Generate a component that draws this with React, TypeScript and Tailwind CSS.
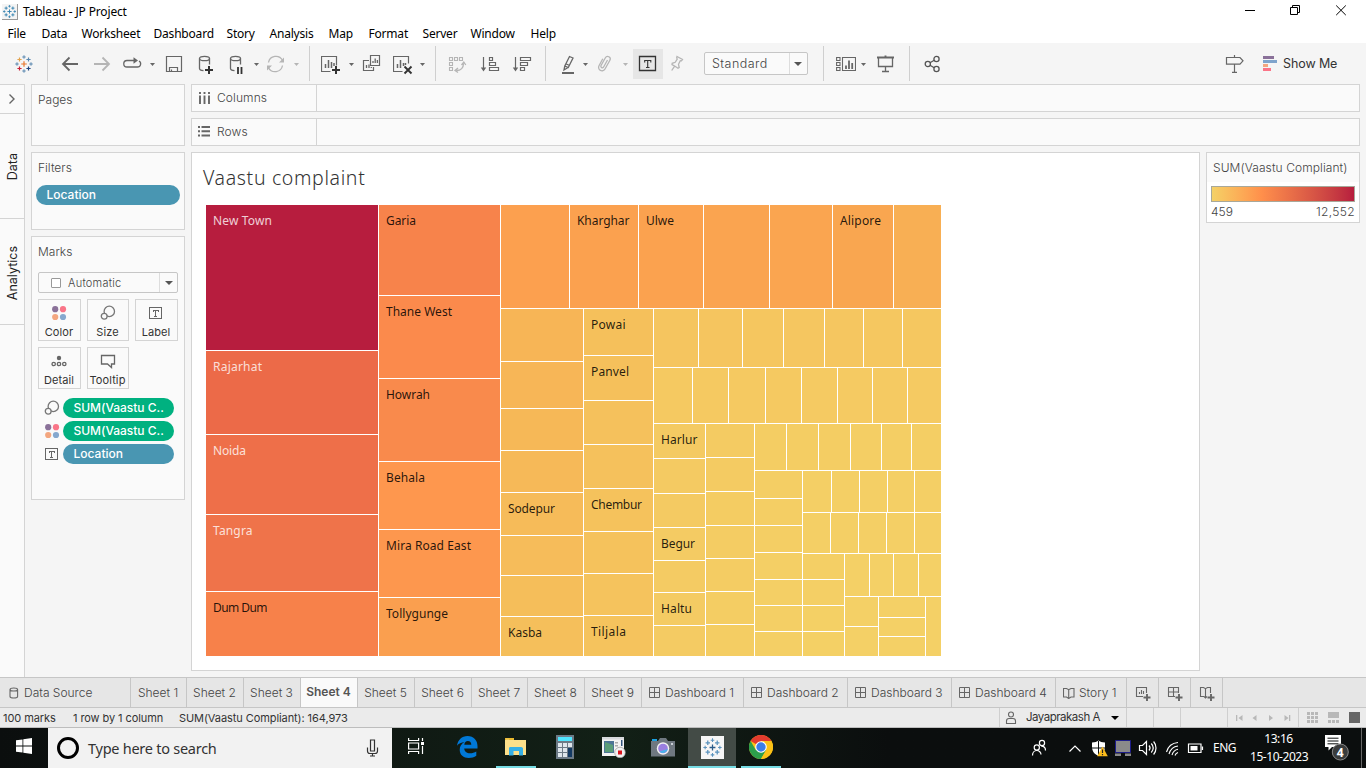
import type { ReactNode } from "react";

/* ---------- treemap ---------- */

type Cell = { x: number; y: number; w: number; h: number; fill: string; label?: string; len?: number; light?: boolean };
type Lbl = [string, number, boolean?];
type RGB = [number, number, number];

const mix = (a: RGB, b: RGB, t: number) =>
  `rgb(${a.map((v, i) => Math.round(v + (b[i] - v) * t)).join(",")})`;

/* A strip of cells, cut vertically ("col") or horizontally ("row") at the given 1px gaps. */
function strip(
  dir: "col" | "row",
  [x0, y0, x1, y1]: [number, number, number, number],
  cuts: number[],
  a: RGB,
  b: RGB,
  labels: Record<number, Lbl> = {},
): Cell[] {
  const ends = [...cuts, dir === "col" ? y1 : x1];
  let start = dir === "col" ? y0 : x0;
  return ends.map((end, i) => {
    const l = labels[i];
    const base = { fill: mix(a, b, ends.length > 1 ? i / (ends.length - 1) : 0), label: l?.[0], len: l?.[1], light: l?.[2] };
    const c =
      dir === "col"
        ? { x: x0, y: start, w: x1 - x0, h: end - start, ...base }
        : { x: start, y: y0, w: end - start, h: y1 - y0, ...base };
    start = end + 1;
    return c;
  });
}

const cells: Cell[] = [
  ...strip("col", [206, 205, 378, 350], [], [183, 29, 62], [183, 29, 62], { 0: ["New Town", 59, true] }),
  ...strip("col", [206, 351, 378, 591], [434, 514], [236, 106, 72], [239, 115, 74], {
    0: ["Rajarhat", 49, true],
    1: ["Noida", 33, true],
    2: ["Tangra", 39.5, true],
  }),
  ...strip("col", [206, 592, 378, 656], [], [247, 129, 74], [247, 129, 74], { 0: ["Dum Dum", 54.5] }),
  ...strip("col", [379, 205, 500, 295], [], [247, 131, 75], [247, 131, 75], { 0: ["Garia", 30] }),
  ...strip("col", [379, 296, 500, 461], [378], [251, 138, 76], [249, 138, 76], { 0: ["Thane West", 66], 1: ["Howrah", 44] }),
  ...strip("col", [379, 462, 500, 597], [529], [254, 151, 78], [253, 151, 78], { 0: ["Behala", 39], 1: ["Mira Road East", 85] }),
  ...strip("col", [379, 598, 500, 656], [], [250, 159, 79], [250, 159, 79], { 0: ["Tollygunge", 62] }),
  ...strip("row", [501, 205, 893, 308], [569, 638, 703, 769, 832], [252, 160, 79], [249, 166, 80], {
    1: ["Kharghar", 52.5],
    2: ["Ulwe", 28],
    5: ["Alipore", 41],
  }),
  ...strip("row", [894, 205, 941, 308], [], [248, 175, 84], [248, 175, 84]),
  ...strip("col", [501, 309, 583, 656], [361, 408, 450, 492, 535, 575, 616], [247, 181, 86], [245, 191, 91], {
    4: ["Sodepur", 47],
    7: ["Kasba", 34],
  }),
  ...strip("col", [584, 309, 653, 656], [355, 400, 444, 488, 531, 573, 615], [245, 192, 91], [245, 195, 93], {
    0: ["Powai", 34.5],
    1: ["Panvel", 38],
    4: ["Chembur", 51],
    7: ["Tiljala", 35],
  }),
  ...strip("row", [654, 309, 941, 367], [698, 742, 783, 824, 863, 902], [245, 197, 95], [245, 199, 96]),
  ...strip("row", [654, 368, 941, 423], [692, 728, 765, 801, 837, 872, 907], [245, 201, 97], [245, 202, 98]),
  ...strip("col", [654, 424, 705, 656], [458, 493, 527, 560, 592, 625], [244, 202, 98], [244, 203, 99], {
    0: ["Harlur", 36.5],
    3: ["Begur", 34],
    5: ["Haltu", 31],
  }),
  ...strip("col", [706, 424, 754, 656], [457, 491, 525, 558, 591, 624], [244, 203, 98], [244, 205, 99]),
  ...strip("row", [755, 424, 941, 470], [786, 818, 850, 881, 911], [244, 205, 99], [244, 206, 100]),
  ...strip("col", [755, 471, 802, 656], [498, 525, 552, 579, 605, 631], [244, 206, 100], [244, 207, 101]),
  ...strip("row", [803, 471, 941, 512], [831, 859, 887, 914], [244, 207, 101], [244, 207, 101]),
  ...strip("row", [803, 513, 941, 553], [830, 858, 886, 914], [244, 207, 101], [244, 207, 101]),
  ...strip("col", [803, 554, 844, 656], [579, 605, 631], [244, 207, 101], [244, 208, 101]),
  ...strip("row", [845, 554, 941, 596], [869, 893, 918], [244, 208, 102], [244, 208, 102]),
  ...strip("col", [845, 597, 878, 656], [626], [244, 208, 102], [244, 208, 102]),
  ...strip("col", [879, 597, 925, 656], [617, 636], [244, 208, 102], [244, 208, 102]),
  ...strip("col", [926, 597, 941, 656], [], [244, 208, 102], [244, 208, 102]),
];

function Treemap() {
  return (
    <svg width="735" height="451" viewBox="206 205 735 451" className="block" shapeRendering="crispEdges">
      {cells.map((c, i) => (
        <rect key={i} x={c.x} y={c.y} width={c.w} height={c.h} fill={c.fill} />
      ))}
      {cells
        .filter((c) => c.label)
        .map((c) => (
          <text
            key={c.label}
            x={c.x + 7}
            y={c.y + 20}
            textLength={c.len}
            className="font-['Noto_Sans',sans-serif] text-[12px]"
            fill={c.light ? "rgba(255,255,255,.8)" : "rgba(0,0,0,.85)"}
          >
            {c.label}
          </text>
        ))}
    </svg>
  );
}

/* ---------- icons ---------- */

function Ico({ w = 20, h = 24, className = "", children }: { w?: number; h?: number; className?: string; children: ReactNode }) {
  return (
    <svg
      width={w}
      height={h}
      viewBox={`0 0 ${w} ${h}`}
      fill="none"
      stroke="#666"
      strokeWidth="1.3"
      className={`block shrink-0 ${className}`}
    >
      {children}
    </svg>
  );
}

const Caret = ({ className = "", color = "#666" }: { className?: string; color?: string }) => (
  <Ico w={6} className={className}>
    <path d="M0 11h5l-2.500 3z" fill={color} stroke="none" />
  </Ico>
);

const Sep = ({ className = "" }: { className?: string }) => <div className={`h-[35px] w-px shrink-0 bg-[#cfcfcf] ${className}`} />;

function LogoMark({ size, palette, className = "" }: { size: number; palette: string[]; className?: string }) {
  const plus = (x: number, y: number, r: number) => `M${x - r} ${y}h${2 * r}M${x} ${y - r}v${2 * r}`;
  const [c, o, s, u, v] = palette;
  return (
    <svg width={size} height={size} viewBox="0 0 20 20" fill="none" strokeWidth="1.2" className={`block shrink-0 ${className}`}>
      <path d={plus(10, 10, 2.8)} stroke={c} />
      <path d={plus(5.5, 5.5, 2.1)} stroke={o} />
      <path d={plus(14.5, 5.5, 2.1)} stroke={s} />
      <path d={plus(5.5, 14.5, 2.1)} stroke={u} />
      <path d={plus(14.5, 14.5, 2.1)} stroke={v} />
      <path d={`${plus(10, 3, 1.7)}${plus(3, 10, 1.7)}${plus(17, 10, 1.7)}${plus(10, 17, 1.7)}`} stroke={s} strokeWidth="1" />
    </svg>
  );
}

const Bubbles = () => (
  <Ico w={16} h={16} className="[stroke:#777]">
    <circle cx="9.3" cy="6.4" r="5.2" />
    <circle cx="4.2" cy="11.2" r="2.9" fill="#fafafa" />
  </Ico>
);
const Dots = () => (
  <Ico w={16} h={16}>
    <g stroke="none">
      <circle cx="4.2" cy="4.2" r="3.1" fill="#8a7199" />
      <circle cx="12" cy="4.2" r="3.1" fill="#f97588" />
      <circle cx="4.2" cy="12" r="3.1" fill="#f3a67f" />
      <circle cx="12" cy="12" r="3.1" fill="#86a8ce" />
    </g>
  </Ico>
);
const TBox = () => (
  <Ico w={16} h={16}>
    <path d="M1.500 2.500h12v11h-12zM5 5.500h5M7.500 5.500v5.500M6 11h3M5 5v2M10 5v2" strokeWidth="1" shapeRendering="crispEdges" />
  </Ico>
);

/* ---------- chrome ---------- */

const menus: [string, string][] = [
  ["File", "w-[34px]"],
  ["Data", "w-[40px]"],
  ["Worksheet", "w-[72px]"],
  ["Dashboard", "w-[73px]"],
  ["Story", "w-[43px]"],
  ["Analysis", "w-[59px]"],
  ["Map", "w-[40px]"],
  ["Format", "w-[54px]"],
  ["Server", "w-[48px]"],
  ["Window", "w-[60px]"],
  ["Help", "w-[40px]"],
];

function TitleBar() {
  return (
    <header className="h-[43px] bg-white font-['Noto_Sans','Open_Sans',sans-serif] text-[12px] text-black">
      <div className="flex h-6 items-center">
        <div className="ml-[2px] flex size-4 items-center justify-center border-r border-b border-[#999] bg-[#f4f4f4]">
          <LogoMark size={15} palette={["#2f7fae", "#2f7fae", "#2f7fae", "#2f7fae", "#2f7fae"]} />
        </div>
        <span className="ml-[5px] tracking-[-0.15px]">Tableau - JP Project</span>
        <svg className="ml-auto mr-[17px] block" width="104" height="20" viewBox="1245 1.500 104 20" fill="none" stroke="#000" strokeWidth="1">
          <path d="M1245 10h10" />
          <path d="M1290.500 7h7v7h-7zM1292.500 7v-2h7v7h-2" />
          <path d="M1336.200 5l9.600 9.600M1345.800 5l-9.600 9.600" />
        </svg>
      </div>
      <nav className="flex h-[19px] items-center pl-[7.500px]">
        {menus.map(([m, w]) => (
          <span key={m} className={`shrink-0 tracking-[-0.2px] ${w}`}>
            {m}
          </span>
        ))}
      </nav>
    </header>
  );
}

function Toolbar() {
  return (
    <div className="flex h-[41px] items-center bg-[#f5f5f5]">
      <LogoMark size={20} className="ml-[14px]" palette={["#e8762c", "#e2a24d", "#5b88b0", "#c72037", "#1f447e"]} />
      <Sep className="ml-[13px]" />
      <Ico className="ml-3">
        <path d="M18 12H3M9.500 5.500L3 12l6.500 6.500" strokeWidth="1.800" />
      </Ico>
      <Ico className="ml-3 [stroke:#b5b5b5]">
        <path d="M2 12h15M10.500 5.500L17 12l-6.500 6.500" strokeWidth="1.800" />
      </Ico>
      <Ico className="ml-[10px]">
        <path d="M12 8.500H5a3.200 3.200 0 0 0 0 6.500h10.500a3.200 3.200 0 0 0 1.500-6" />
        <path d="M11.500 5.300l4.500 3.200-4.500 3.200z" fill="#666" stroke="none" />
      </Ico>
      <Caret className="ml-2" />
      <Ico className="ml-2">
        <path d="M2.500 4.500h15v15h-15zM5.500 19.500v-4h8v4M7.500 19.500v-2" strokeWidth="1.200" />
      </Ico>
      <Ico className="ml-3">
        <ellipse cx="8.500" cy="6.500" rx="5" ry="2.200" />
        <path d="M3.500 6.500v10c0 1.200 2 2 4 2.200M13.500 6.500v6" />
        <path d="M13 14v8M9 18h8" stroke="#333" strokeWidth="2" />
      </Ico>
      <Ico className="ml-[11px]">
        <ellipse cx="8.500" cy="6.500" rx="5" ry="2.200" />
        <path d="M3.500 6.500v10c0 1.200 2 2 4 2.200M13.500 6.500v6" />
        <path d="M11 15v7M14.500 15v7" stroke="#333" strokeWidth="1.800" />
      </Ico>
      <Caret className="ml-[7px]" />
      <Ico className="ml-[6px] [stroke:#b5b5b5]">
        <path d="M2.500 10.500a7.500 7.500 0 0 1 14-2.200M16.500 13.500a7.500 7.500 0 0 1-14 2.200" />
        <path d="M18 5.500v5h-5zM1 18.500v-5h5z" fill="#b5b5b5" stroke="none" />
      </Ico>
      <Caret className="ml-2" color="#b5b5b5" />
      <Sep className="ml-[9px]" />
      <Ico className="ml-[11px]">
        <path d="M9.500 19.500h-9v-15h15v9" strokeWidth="1.200" />
        <path d="M4.500 16v-4M7.500 16V8M10.500 16v-6M13 14v-3" strokeWidth="1.500" />
        <path d="M15 14v8M11 18h8" stroke="#333" strokeWidth="2" />
      </Ico>
      <Caret className="ml-2" />
      <Ico className="ml-[7px]">
        <path d="M8.500 3.500h9v10h-9zM7 8.500H1.500v10h10V15" strokeWidth="1.200" />
        <path d="M11 11V9M13.200 11V6.500M15.400 11V8M4.500 16v-3M7 16v-3.500M9.300 16v-1" />
      </Ico>
      <Ico className="ml-[11px]">
        <path d="M9.500 19.500h-9v-15h15v7" strokeWidth="1.200" />
        <path d="M4.500 16v-4M7.500 16V8M10.500 14v-3M12.500 13v-2" strokeWidth="1.500" />
        <path d="M11.500 14.500l7 7M18.500 14.500l-7 7" stroke="#333" strokeWidth="1.900" />
      </Ico>
      <Caret className="ml-[7px]" />
      <Sep className="ml-[9px]" />
      <Ico className="ml-3 [stroke:#b5b5b5]">
        <path d="M1.500 5.500h3v3h-3zM6.500 5.500h3v3h-3zM11.500 5.500h3v3h-3zM1.500 10.500h3v3h-3zM1.500 15.500h3v3h-3z" strokeWidth="1.100" />
        <path d="M15.500 11.500c0 4-2.500 7-7 7M13.500 13l2.300-3 2 3M10 16l-3 2.500 3 2" />
      </Ico>
      <Ico className="ml-3">
        <path d="M3.500 5v12M9.500 5.500h3v3h-3zM9.500 10.500h6v3h-6zM9.500 15.500h9v3h-9z" strokeWidth="1.200" />
        <path d="M.8 15.500h5.400l-2.700 4z" fill="#666" stroke="none" />
      </Ico>
      <Ico className="ml-3">
        <path d="M3.500 5v12M8.500 5.500h10v3h-10zM8.500 10.500h7v3h-7zM8.500 15.500h4v3h-4z" strokeWidth="1.200" />
        <path d="M.8 15.500h5.400l-2.700 4z" fill="#666" stroke="none" />
      </Ico>
      <Sep className="ml-[13px]" />
      <Ico className="ml-[14px]">
        <path d="M9.500 4.500l3.500 1.500-4.700 9.500-3.500-1.500zM4.800 14l-.8 4 4-2.500M6.200 12l3.500 1.500" />
        <path d="M2 21h12" strokeWidth="2" />
      </Ico>
      <Caret className="ml-[3px]" />
      <Ico className="ml-[7px] [stroke:#b5b5b5]">
        <path d="M11.500 8l-4 7.200a1.500 1.500 0 0 1-2.600-1.400l4.500-8a2.500 2.500 0 0 1 4.500 2.400L9 17a3.400 3.400 0 0 1-6-3.200l3.800-7" />
      </Ico>
      <Caret className="ml-[7px]" color="#b5b5b5" />
      <div className="ml-1 flex size-[30px] shrink-0 items-center justify-center bg-[#e6e6e6]">
        <Ico h={20} className="[stroke:#333]">
          <path d="M1.500 2.500h16v14h-16z" />
          <path d="M6.500 6.500H13M9.700 6.500v7M8 13.500h3.500M6.700 6v2.500M12.800 6v2.500" strokeWidth="1.100" />
        </Ico>
      </div>
      <Ico className="ml-[5px] [stroke:#b5b5b5]">
        <path d="M9 4.500l5.500 3-1 1.300-1.200-.2-1.800 3.700.7 3.200-1.200.8-3-2-3-1.700.2-1.300 3-1 2-3.200-.5-1.300zM6.500 14.300L3.700 18.500" />
      </Ico>
      <div className="ml-4 flex h-[23px] w-[104px] shrink-0 items-center rounded-[2px] border border-[#c6c6c6] bg-[#fafafa] pl-[7px] font-['Inter',sans-serif] text-[12.500px] text-[#444]">
        <span className="w-[77px] pt-px font-light tracking-[0.45px]">Standard</span>
        <span className="flex h-full items-center border-l border-[#ddd] pl-[4px]">
          <svg width="8" height="4" className="block">
            <path d="M0 0h8L4 4z" fill="#555" />
          </svg>
        </span>
      </div>
      <Sep className="ml-[15px]" />
      <Ico className="ml-3">
        <path d="M.6 5.500h3.400v3H.6zM.6 10.500h3.400v3H.6zM.6 15.500h3.400v3H.6zM6.500 5.500h13v13h-13z" strokeWidth="1.100" />
        <path d="M10 17v-3.500M13 17V8.500M16.200 17v-6" strokeWidth="1.800" />
      </Ico>
      <Caret className="ml-[5px]" />
      <Ico className="ml-[9px]">
        <path d="M1 5.500h17M9.500 3.500v2" strokeWidth="1.900" />
        <path d="M2.500 6v8.500h14V6M9.500 14.500v5M6 19.500h7" />
      </Ico>
      <Sep className="ml-[13px]" />
      <Ico className="ml-[13px] [stroke:#555]">
        <circle cx="4.800" cy="12" r="2.600" />
        <circle cx="13.500" cy="7" r="2.600" />
        <circle cx="13.500" cy="17" r="2.600" />
        <path d="M7 10.700l4.200-2.400M7 13.300l4.200 2.400" />
      </Ico>
      <Ico className="ml-[282px]">
        <path d="M1.500 5.500H15l3 3.300-3 3.400H1.500zM9.500 3v2.500M9.500 12v8M7 20.300h5" strokeWidth="1.200" />
      </Ico>
      <Ico w={14} className="ml-[18px]">
        <g stroke="none">
          <path d="M0 4h11v3H0z" fill="#8a7199" />
          <path d="M0 8h14v3H0z" fill="#7fa4cc" />
          <path d="M0 12h5v3H0z" fill="#f3a67f" />
          <path d="M0 16h8v3H0z" fill="#fb7487" />
        </g>
      </Ico>
      <span className="ml-[6px] pt-px font-['Inter',sans-serif] text-[12.500px] tracking-[-0.1px] whitespace-nowrap text-[#333]">Show Me</span>
    </div>
  );
}

const card = "border border-[#d4d4d4] bg-[#fafafa]";

function MarkButton({ label, children }: { label: string; children: ReactNode }) {
  return (
    <div className={`flex h-[42px] flex-col items-center pt-[5px] pr-px ${card}`}>
      {children}
      <span className="mt-[3px] text-[11px] leading-[16px] tracking-[0.1px] whitespace-nowrap text-[#333]">{label}</span>
    </div>
  );
}

function Pill({ className, children }: { className: string; children: ReactNode }) {
  return (
    <div className={`flex h-5 items-center rounded-full text-[12px] font-medium whitespace-nowrap text-white ${className}`}>{children}</div>
  );
}

function SideCards() {
  return (
    <aside className="ml-[6px] flex w-[154px] shrink-0 flex-col gap-[6px] font-['Inter',sans-serif] text-[12px] text-[#444]">
      <section className={`h-[62px] px-[6px] pt-[7px] ${card}`}>
        <h2 className="leading-[16px] font-light">Pages</h2>
      </section>
      <section className={`h-[78px] px-1 pt-[7px] ${card}`}>
        <h2 className="pl-[2px] leading-[16px] font-light">Filters</h2>
        <Pill className="mt-[9px] bg-[#4996b2] pl-[10.500px]">Location</Pill>
      </section>
      <section className={`h-[264px] px-[6px] pt-[7px] ${card}`}>
        <h2 className="leading-[16px] font-light">Marks</h2>
        <div className="mt-[12px] flex h-[21px] items-center rounded-[2px] border border-[#c6c6c6] pl-3 text-[11px]">
          <span className="size-[10px] rounded-[1px] border border-[#999] bg-white" />
          <span className="ml-[7px] w-[91px] pt-px font-light tracking-[0.25px]">Automatic</span>
          <span className="flex h-full items-center border-l border-[#ddd] pl-[5px]">
            <svg width="8" height="4" className="block">
              <path d="M0 0h8L4 4z" fill="#555" />
            </svg>
          </span>
        </div>
        <div className="mt-[6px] grid grid-cols-[43px_42px_43px] gap-[6px]">
          <MarkButton label="Color">
            <Dots />
          </MarkButton>
          <MarkButton label="Size">
            <Bubbles />
          </MarkButton>
          <MarkButton label="Label">
            <TBox />
          </MarkButton>
          <MarkButton label="Detail">
            <Ico w={16} h={16}>
              <circle cx="8" cy="5" r="2.200" fill="#666" stroke="none" />
              <circle cx="2.700" cy="11" r="1.700" />
              <circle cx="8" cy="11" r="1.700" />
              <circle cx="13.300" cy="11" r="1.700" />
            </Ico>
          </MarkButton>
          <MarkButton label="Tooltip">
            <Ico w={16} h={16}>
              <path d="M1.500 2.500h13v8.500h-3v3.500L7.500 11h-6z" />
            </Ico>
          </MarkButton>
        </div>
        <div className="mt-[9px] grid grid-cols-[16px_111px] items-center gap-x-[3px] gap-y-[3px] pl-[6px]">
          <Bubbles />
          <Pill className="bg-[#00b180] pl-[10.500px] tracking-[-0.02px]">SUM(Vaastu C..</Pill>
          <Dots />
          <Pill className="bg-[#00b180] pl-[10.500px] tracking-[-0.02px]">SUM(Vaastu C..</Pill>
          <TBox />
          <Pill className="bg-[#4996b2] pl-[10.500px]">Location</Pill>
        </div>
      </section>
    </aside>
  );
}

function Shelf({ label, children }: { label: string; children: ReactNode }) {
  return (
    <div className={`flex h-[28px] shrink-0 items-center pl-[5px] ${card}`}>
      {children}
      <span className="ml-[6px] w-[99px] text-[12px] font-light tracking-[0.1px]">{label}</span>
      <span className="h-full w-px bg-[#d4d4d4]" />
    </div>
  );
}

function Workspace() {
  return (
    <div className="flex h-[593px] bg-[#f5f5f5]">
      <div className="flex w-[25px] shrink-0 flex-col border-t border-r border-[#d4d4d4] bg-[#fafafa] font-['Inter',sans-serif] text-[12.500px] text-[#222]">
        <div className="flex h-[29px] items-center justify-center border-b border-[#d4d4d4]">
          <Ico w={8} h={12}>
            <path d="M1.500 1.500L6 6l-4.500 4.500" strokeWidth="1.400" />
          </Ico>
        </div>
        <div className="flex h-[105px] items-center justify-center border-b border-[#d4d4d4] pt-[2px] pl-[2px]">
          <span className="rotate-180 [writing-mode:vertical-rl]">Data</span>
        </div>
        <div className="flex h-[106px] items-center justify-center border-b border-[#d4d4d4] pt-[3px] pl-[2px]">
          <span className="rotate-180 [writing-mode:vertical-rl]">Analytics</span>
        </div>
      </div>
      <SideCards />
      <main className="ml-[6px] flex w-[1169px] shrink-0 flex-col gap-[6px] font-['Inter',sans-serif] text-[#444]">
        <Shelf label="Columns">
          <Ico w={14} h={14}>
            <path d="M3 1v2M7.500 1v2M12 1v2M3 4.500V13M7.500 4.500V13M12 4.500V13" strokeWidth="1.900" />
          </Ico>
        </Shelf>
        <Shelf label="Rows">
          <Ico w={14} h={14}>
            <path d="M1 2h2M1 6.200h2M1 10.500h2M4.500 2H13M4.500 6.200H13M4.500 10.500H13" strokeWidth="1.900" />
          </Ico>
        </Shelf>
        <div className="flex items-start gap-[6px]">
          <section className="h-[519px] w-[1009px] shrink-0 border border-[#d4d4d4] bg-white pt-[12px] pl-[11px]">
            <h1 className="font-['Noto_Sans',sans-serif] text-[19.500px] leading-[26px] font-light tracking-[0.650px] text-[#333]">Vaastu complaint</h1>
            <div className="mt-[14px] ml-[3px]">
              <Treemap />
            </div>
          </section>
          <section className="h-[71px] w-[154px] shrink-0 border border-[#d4d4d4] bg-white">
            <h2 className="h-[29px] bg-[#fafafa] pt-[6px] pl-[6px] text-[12px] leading-[18px] font-light tracking-[0.08px] whitespace-nowrap">
              SUM(Vaastu Compliant)
            </h2>
            <div className="mt-[4px] ml-1 h-4 w-36 border border-[#a8a89a] bg-linear-to-r from-[#f4d166] via-[#ff8f4b] via-35% to-[#b71d3e]" />
            <div className="flex w-[148px] justify-between pt-px pl-1 text-[12px] leading-[18px] font-light tracking-[0.350px]">
              <span className="tracking-normal">459</span>
              <span>12,552</span>
            </div>
          </section>
        </div>
      </main>
    </div>
  );
}

/* ---------- bottom bars ---------- */

const GridIco = () => (
  <Ico w={12} h={12} className="mr-[4px]">
    <path d="M.5 .5h10v10H.5zM5.500 .5v10M.5 5.500h10" strokeWidth="1" />
  </Ico>
);

const sheetTabs: [string, string][] = [
  ["Sheet 1", "w-[56px]"],
  ["Sheet 2", "w-[57px]"],
  ["Sheet 3", "w-[57px]"],
  ["Sheet 4", "w-[57px]"],
  ["Sheet 5", "w-[57px]"],
  ["Sheet 6", "w-[57px]"],
  ["Sheet 7", "w-[56px]"],
  ["Sheet 8", "w-[57px]"],
  ["Sheet 9", "w-[57px]"],
];
const dashTabs: [string, string][] = [
  ["Dashboard 1", "w-[102px]"],
  ["Dashboard 2", "w-[104px]"],
  ["Dashboard 3", "w-[104px]"],
  ["Dashboard 4", "w-[104px]"],
];

function SheetTabs() {
  const tab = "flex shrink-0 items-center border-r border-[#c6c6c6] whitespace-nowrap";
  return (
    <div className="flex h-[31px] border-t border-b border-[#c6c6c6] bg-[#e6e6e6] font-['Inter',sans-serif] text-[12px] font-light text-[#444]">
      <div className={`w-[131px] pl-[9px] ${tab}`}>
        <Ico w={10} h={12} className="mr-[5px]">
          <path d="M1 2.500v7c0 .8 1 1.500 3.800 1.500s3.800-.7 3.800-1.500v-7C8.600 1.700 7.600 1 4.800 1S1 1.700 1 2.500c0 .8 1 1.500 3.800 1.500s3.800-.7 3.800-1.500" strokeWidth="1.100" />
        </Ico>
        Data Source
      </div>
      {sheetTabs.map(([t, w]) => (
        <div key={t} className={`justify-center pr-px ${tab} ${w} ${t === "Sheet 4" ? "bg-[#fafafa] pb-[2px] font-semibold text-[#555]" : ""}`}>
          {t}
        </div>
      ))}
      {dashTabs.map(([t, w]) => (
        <div key={t} className={`pl-[7px] ${tab} ${w}`}>
          <GridIco />
          {t}
        </div>
      ))}
      <div className={`w-[71px] pl-[7px] ${tab}`}>
        <Ico w={12} h={12} className="mr-[4px]">
          <path d="M.5 1.500l3 0 2.200 1.200L8 1.500h3v8.500H8L5.700 11.500 3.500 10h-3zM5.700 2.700v8.500" strokeWidth="1.100" />
        </Ico>
        Story 1
      </div>
      <div className={`w-8 justify-center ${tab}`}>
        <Ico w={16} h={16} className="mt-[2px]">
          <path d="M8 10.500H1.500v-9h10V7M4.500 8V6M6.500 8V4M8.500 8V5" strokeWidth="1.100" />
          <path d="M12 8v7M8.500 11.500h7" strokeWidth="1.900" />
        </Ico>
      </div>
      <div className={`w-8 justify-center ${tab}`}>
        <Ico w={16} h={16} className="mt-[2px]">
          <path d="M8 10.500H1.500v-9h10V7M6.500 1.500v9M1.500 6h10" strokeWidth="1.100" />
          <path d="M12 8v7M8.500 11.500h7" strokeWidth="1.900" />
        </Ico>
      </div>
      <div className={`w-8 justify-center ${tab}`}>
        <Ico w={16} h={16} className="mt-[2px]">
          <path d="M8 10.500L6.500 12 5 10.500H1.500v-9h3l2 1.200 2-1.200h3V7M6.500 2.700V11" strokeWidth="1.100" />
          <path d="M12 8v7M8.500 11.500h7" strokeWidth="1.900" />
        </Ico>
      </div>
    </div>
  );
}

function StatusBar() {
  return (
    <div className="flex h-5 items-stretch border-b border-[#bdbdbd] bg-[#ebebeb] font-['Inter',sans-serif] text-[11px] text-[#333]">
      <div className="flex w-[999px] shrink-0 items-center pt-px pl-[3px] tracking-[-0.08px]">
        <span className="w-[70px]">100 marks</span>
        <span className="w-[106px]">1 row by 1 column</span>
        <span>SUM(Vaastu Compliant): 164,973</span>
      </div>
      <div className="flex w-[128px] shrink-0 items-center border-x border-[#cfcfcf] pl-[5px]">
        <Ico w={12} h={14}>
          <circle cx="6" cy="3.500" r="2.500" strokeWidth="1.100" />
          <path d="M1.500 12.500V10c0-1.500 1-2.500 2.500-2.500h4c1.500 0 2.500 1 2.500 2.500v2.500z" strokeWidth="1.100" />
        </Ico>
        <span className="ml-[9px] w-[85px] pt-px text-[11.500px] tracking-[-0.5px] whitespace-nowrap">Jayaprakash A</span>
        <svg width="8" height="4" className="block">
          <path d="M0 0h8L4 4z" fill="#000" />
        </svg>
      </div>
      <div className="w-[27px] shrink-0 border-r border-[#cfcfcf]" />
      <div className="w-[27px] shrink-0 border-r border-[#cfcfcf]" />
      <div className="w-[47px] shrink-0 border-r border-[#cfcfcf]" />
      <div className="flex w-[71px] shrink-0 items-center justify-center border-r border-[#cfcfcf]">
        <svg width="56" height="8" viewBox="0 0 56 8" fill="#b8b8b8" className="block">
          <path d="M1 1h1.300v6H1zM7.500 1v6L3.500 4zM21.500 1v6l-4-3zM34 1v6l4-3zM49.500 1v6l4-3zM54 1h1.300v6H54z" />
        </svg>
      </div>
      <svg width="54" height="12" viewBox="0 0 54 12" fill="#b8b8b8" className="mt-[4px] ml-2 block shrink-0">
        {[0, 4, 8].map((y) => (
          <path key={y} d={`M0 ${y}h3v3h-3zM4 ${y}h3v3h-3zM8 ${y}h3v3h-3z`} />
        ))}
        <path d="M21 0h11v6H21zM21 8h3v3h-3zM25 8h3v3h-3zM29 8h3v3h-3z" />
        <path d="M42 0h11v11H42z" fill="#666" />
      </svg>
    </div>
  );
}

function Slot({ className = "", children }: { className?: string; children?: ReactNode }) {
  return <div className={`flex h-10 shrink-0 items-center justify-center border-b-2 ${className}`}>{children}</div>;
}

function Taskbar() {
  return (
    <footer className="flex h-10 items-center bg-[#0c100f] bg-linear-to-r from-[#0b0e0e] via-[#122016] via-45% to-[#0b0e0e] to-65% font-['Noto_Sans','Open_Sans',sans-serif] text-white">
      <div className="flex w-12 shrink-0 justify-center">
        <svg width="16" height="16" viewBox="0 0 16 16" fill="#fff" className="mb-1 block">
          <path d="M0 2.300L6.500 1.400v6.200H0zM7.300 1.300L16 0v7.600H7.300zM0 8.400h6.500v6.200L0 13.700zM7.300 8.400H16V16l-8.700-1.200z" />
        </svg>
      </div>
      <div className="flex h-10 w-[344px] shrink-0 items-center bg-[#f2f2f2] pl-[9px] text-[#333]">
        <span className="size-[22px] rounded-full border-[3px] border-black" />
        <span className="ml-[9px] w-[277px] pt-px text-[14.500px] tracking-[-0.26px]">Type here to search</span>
        <svg width="14" height="18" viewBox="0 0 14 18" fill="none" stroke="#333" strokeWidth="1.200" className="block">
          <path d="M5.500 1h4v11h-4zM2.500 8.500V12c0 1.500 1 2.500 2.500 2.500h5c1.500 0 2.500-1 2.500-2.500V8.500M7.500 14.500V17M5 17h5" />
        </svg>
      </div>
      <Slot className="w-12 border-transparent">
        <svg width="17" height="16" viewBox="0 0 17 16" fill="none" stroke="#fff" strokeWidth="1.200" className="mb-[2px] block">
          <path d="M.6 0v2.500h10V0M.6 5h10v6h-10zM.6 16v-2.500h10V16M14.500 0v3M14.500 8v8" />
          <path d="M13 4h3v3h-3z" fill="#fff" stroke="none" />
        </svg>
      </Slot>
      <Slot className="w-[54px] border-transparent">
        <svg width="21" height="22" viewBox="0 0 21 22" className="block">
          <path
            d="M0 9.700C.7 4 4.800 0 10.500 0 16.800 0 20.500 4.500 20.500 10v2.500H7.200c.2 3 2.500 4.800 5.800 4.800 2.300 0 4.500-.6 6.300-1.800v4.300C17.300 21.200 14.500 22 11.700 22 6.500 22 2.700 19 2.700 13.800c0-3.500 1.800-6.300 5-7.800-3.500.3-6.200 1.700-7.700 3.700zM7.300 8.800h7c0-2.200-1.200-3.700-3.400-3.700-2.100 0-3.400 1.500-3.600 3.700z"
            fill="#0078d7"
          />
        </svg>
      </Slot>
      <Slot className="ml-[2px] w-10 border-[#76dce4]">
        <svg width="22" height="20" viewBox="0 0 22 20" className="block">
          <path d="M0 1h9v3H0z" fill="#e9b92f" />
          <path d="M0 3h21v15H0z" fill="#fde08a" />
          <path d="M1 1.500h3v1.500H1z" fill="#fff3" />
          <path d="M4 11.500c0-1 .5-1.500 1.500-1.500h10c1 0 2.500.5 2.500 1.500v7h-4V14H8.500v4.500H4z" fill="#36b0e6" />
        </svg>
      </Slot>
      <Slot className="ml-[9px] w-10 border-transparent">
        <svg width="18" height="24" viewBox="0 0 18 24" className="block">
          <path d="M0 0h18v24H0z" fill="#6c7a86" />
          <path d="M2 2h14v4H2z" fill="#50e6ff" />
          {[8, 13, 18].map((y) => (
            <path key={y} d={`M2 ${y}h4v4H2zM7 ${y}h4v4H7z`} fill="#dfe6ec" />
          ))}
          <path d="M12 8h4v4h-4z" fill="#dfe6ec" />
          <path d="M12 13h4v9h-4z" fill="#143a63" />
        </svg>
      </Slot>
      <Slot className="ml-[9px] w-10 border-transparent">
        <svg width="24" height="21" viewBox="0 0 24 21" className="block">
          <path d="M0 0h22v19H0z" fill="#f3f3f3" />
          <path d="M0 0h22v2.500H0z" fill="#d6d9dc" />
          <path d="M2 4h10v12H2z" fill="#4d7596" />
          <path d="M3 5l8 3v7H3z" fill="#5b9d78" />
          <path d="M13 5h3v1.500h-3zM13 8h3v1.500h-3z" fill="#aaa" />
          <path d="M19 3h1.500v6H19z" fill="#34557e" />
          <circle cx="18" cy="15.500" r="5.300" fill="#f1f1f1" stroke="#999" strokeWidth=".7" />
          <path d="M16 13.500h4v4h-4z" fill="#d8141c" />
        </svg>
      </Slot>
      <Slot className="ml-[9px] w-10 border-transparent">
        <svg width="24" height="19" viewBox="0 0 24 19" className="block">
          <path d="M1 1h5v3H1z" fill="#1ba1e2" />
          <path d="M0 3h7l2-3h6l2 3h7v15.500H0z" fill="#6f7880" />
          <circle cx="12" cy="10.500" r="6.200" fill="#f3f3f3" />
          <circle cx="12" cy="10.500" r="4.800" fill="#9a7fe0" />
          <path d="M8.500 13.500a4.800 4.800 0 0 0 8.300-2.500z" fill="#49b3ea" />
          <path d="M20 5h2v2h-2z" fill="#c9ced3" />
        </svg>
      </Slot>
      <Slot className="ml-[5px] w-12 border-[#76dce4] bg-[#434b46]">
        <div className="flex size-[23px] items-center justify-center bg-[#f6f6f6]">
          <LogoMark size={21} palette={["#2b5c8a", "#5b93bd", "#5b93bd", "#5b93bd", "#5b93bd"]} />
        </div>
      </Slot>
      <Slot className="ml-[5px] w-10 border-[#76dce4]">
        <svg width="24" height="24" viewBox="0 0 24 24" className="block">
          <circle cx="12" cy="12" r="12" fill="#fbc116" />
          <path d="M12 12L1.600 6A12 12 0 0 1 22.400 6H12z" fill="#e33b2e" />
          <path d="M1.600 6A12 12 0 0 0 12 24l5.200-9L12 12 6.800 15z" fill="#2c9f4b" />
          <path d="M12 6h10.400A12 12 0 0 1 12 24l5.200-9z" fill="#fbc116" />
          <circle cx="12" cy="12" r="5.800" fill="#fff" />
          <circle cx="12" cy="12" r="4.700" fill="#3b7de8" />
        </svg>
      </Slot>
      <svg width="181" height="24" viewBox="1029 736 181 24" fill="none" stroke="#fff" strokeWidth="1.200" className="ml-[248px] block shrink-0">
        <circle cx="1036.800" cy="747.500" r="2.600" />
        <path d="M1032.500 755.500c0-3 2-5 4.300-5s4.200 2 4.200 4" />
        <circle cx="1042" cy="743" r="2.600" />
        <path d="M1041.300 746.200c2.500 0 4.200 1.800 4.200 4.300" />
        <path d="M1069.500 751.500l5.500-5.500 5.500 5.500" />
        <path d="M1092 742.500c3 0 5-.7 6.500-2 1.500 1.300 3.500 2 6.500 2v4.500c0 4.500-3 7.500-6.500 9-3.500-1.500-6.500-4.500-6.500-9z" fill="#fff" stroke="none" />
        <path d="M1098.500 741v14M1092 748h13" stroke="#0b0e0e" strokeWidth="1" />
        <path d="M1102.500 746.500l5.300 9.800h-10.600z" fill="#fbbc1c" stroke="none" />
        <path d="M1102.500 749.500v3.500M1102.500 754v1.200" stroke="#222" />
        <path d="M1115.500 740.500h15v12h-15z" fill="#8a8a8a" stroke="#1d1d8a" strokeWidth="1" />
        <path d="M1115 753.500h6v2.500h-6zM1125 753.500h6v2.500h-6z" fill="#8a8a8a" stroke="none" />
        <path d="M1139.500 745.500h3l4-4v13l-4-4h-3zM1149 745.500c1.300 1.500 1.300 3.500 0 5M1151.300 743.500c2.300 2.700 2.300 6.300 0 9M1153.600 741.500c3.200 3.800 3.200 9.200 0 13" />
        <path d="M1166.500 752c1.500-5.500 5.500-9 11.500-9.500M1169 754c1.300-4.500 4.500-7.500 9-8M1172 755c1-3.300 3-5.200 6-5.700M1175 755.500c.5-1.500 1.500-2.500 3-3" strokeWidth="1.100" />
        <path d="M1188.500 744h12.500v8.500h-12.500zM1202.500 746.500v3.500" />
        <path d="M1190.500 746h7v4.500h-7z" fill="#fff" stroke="none" />
      </svg>
      <span className="ml-[3px] w-[37px] text-[12px] tracking-[-0.5px]">ENG</span>
      <div className="flex w-[57px] shrink-0 flex-col text-center text-[12px] leading-[18px] tracking-[-0.45px] whitespace-nowrap">
        <span>13:16</span>
        <span>15-10-2023</span>
      </div>
      <svg width="26" height="26" viewBox="0 0 26 26" className="ml-[17px] block shrink-0">
        <path d="M1 0h16v12H8l-3.500 3.500V12H1z" fill="#fff" />
        <path d="M3.500 3.200h11M3.500 6h11M3.500 8.800h11" stroke="#0b0e0e" strokeWidth="1" />
        <circle cx="16.300" cy="17" r="8" fill="#3a3c3c" stroke="#888" strokeWidth="1" />
        <text x="16.300" y="21.500" textAnchor="middle" className="fill-white text-[12px] font-bold">
          4
        </text>
      </svg>
      <div className="ml-[11px] h-10 w-px bg-[#666]" />
    </footer>
  );
}

export default function App() {
  return (
    <div className="flex h-[768px] w-[1366px] flex-col overflow-hidden bg-[#f5f5f5]">
      <TitleBar />
      <Toolbar />
      <Workspace />
      <SheetTabs />
      <StatusBar />
      <Taskbar />
    </div>
  );
}
